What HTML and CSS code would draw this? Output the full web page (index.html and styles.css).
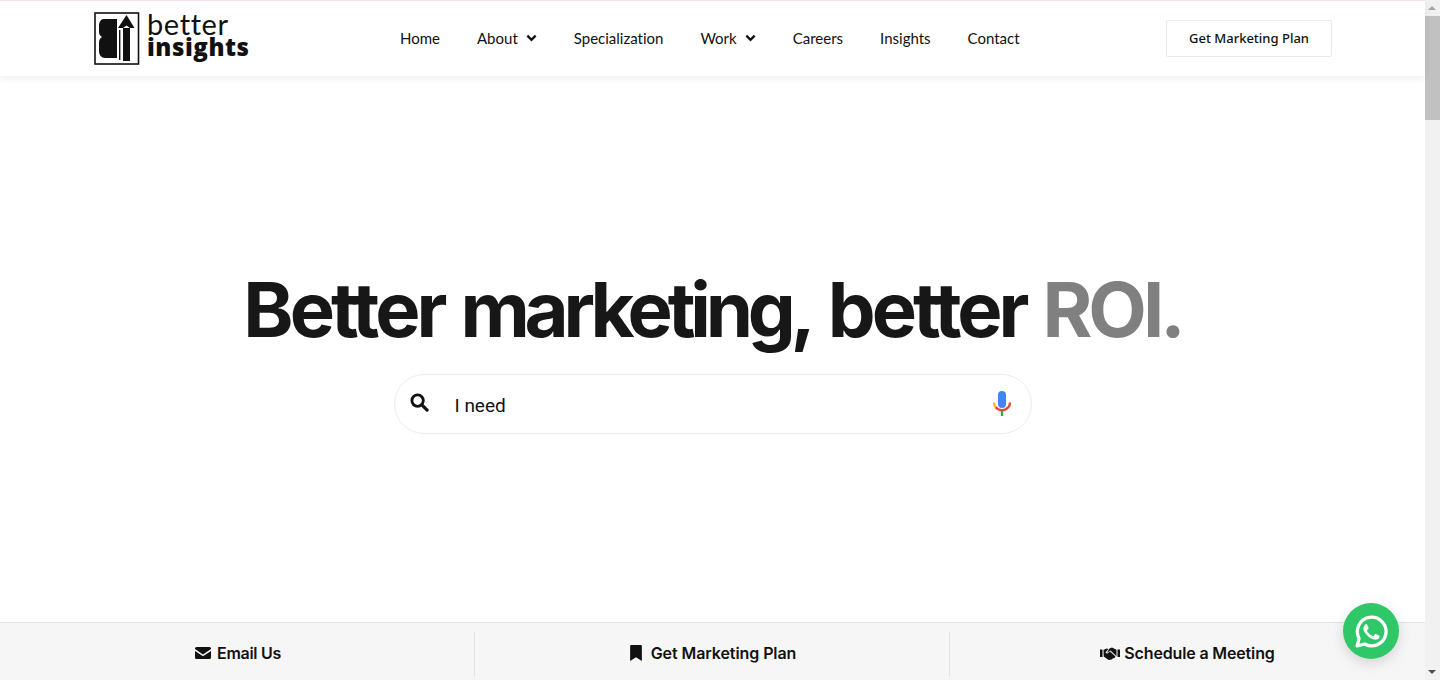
FILE: index.html
```html
<!DOCTYPE html>
<html lang="en">
<head>
<meta charset="utf-8">
<title>Better Insights</title>
<link rel="stylesheet" href="styles.css">
</head>
<body>
<div class="page">
  <header class="header">
    <a class="logo" href="#">
      <svg class="logo-mark" viewBox="0 0 46 53" width="46" height="53">
        <rect x="1" y="1" width="43.500" height="51" fill="#fff" stroke="#111" stroke-width="1.600"/>
        <path d="M9.500 7H23v39H11c-3.500 0-6-3-6-7v-8c0-3 1-5 3-6-2-1-3-3-3-5v-6c0-4 2-7 4.500-7z" fill="#111"/>
        <path d="M32.500 3l8 13h-4.500l-3.500-2.500L29 16h-5z" fill="#111"/>
        <rect x="29" y="16" width="7" height="33" fill="#111"/>
        <rect x="25" y="18" width="1.400" height="30" fill="#111"/>
      </svg>
      <span class="logo-text">
        <span class="logo-top">better</span>
        <span class="logo-bottom">insights</span>
      </span>
    </a>
    <nav class="nav">
      <a href="#">Home</a>
      <a href="#">About<svg class="chev" viewBox="0 0 12 8" width="11" height="8"><path d="M1.500 1.500L6 6l4.500-4.500" fill="none" stroke="#111" stroke-width="2.600"/></svg></a>
      <a href="#">Specialization</a>
      <a href="#">Work<svg class="chev" viewBox="0 0 12 8" width="11" height="8"><path d="M1.500 1.500L6 6l4.500-4.500" fill="none" stroke="#111" stroke-width="2.600"/></svg></a>
      <a href="#">Careers</a>
      <a href="#">Insights</a>
      <a href="#">Contact</a>
    </nav>
    <a class="cta" href="#">Get Marketing Plan</a>
  </header>

  <main class="hero">
    <h1 class="title">Better <span class="title-tight">marketing,</span> better <span class="muted">ROI.</span></h1>
    <div class="search">
      <svg class="search-icon" viewBox="0 0 20 20" width="19" height="19"><circle cx="8" cy="8" r="6" fill="none" stroke="#111" stroke-width="3"/><path d="M12.500 12.500L18 18" stroke="#111" stroke-width="3.400" stroke-linecap="round"/></svg>
      <span class="search-text">I need</span>
      <svg class="mic" viewBox="0 0 20 28" width="20" height="28">
        <rect x="6" y="1" width="8" height="17" rx="4" fill="#4285f4"/>
        <path d="M2 12.500c0 2 .6 3.600 1.700 4.800" fill="none" stroke="#fbbc05" stroke-width="2.400"/>
        <path d="M3.700 17.300C5.500 19.300 7.600 20.300 10 20.300s4.500-1 6.300-3 1.700-2.800 1.700-4.800" fill="none" stroke="#ea4335" stroke-width="2.400"/>
        <rect x="8.800" y="20.500" width="2.400" height="5.500" fill="#34a853"/>
      </svg>
    </div>
  </main>

  <footer class="actions">
    <a class="action action-email" href="#">
      <svg viewBox="0 0 16 12" width="16" height="12"><path d="M1.500 0h13A1.500 1.500 0 0 1 16 1.500v.6L8 7.500 0 2.100v-.6A1.500 1.500 0 0 1 1.500 0zM0 4l8 5.300L16 4v6.500a1.500 1.500 0 0 1-1.500 1.500h-13A1.500 1.500 0 0 1 0 10.500z" fill="#111"/></svg>
      Email Us
    </a>
    <a class="action action-wide" href="#">
      <svg viewBox="0 0 11 15" width="12" height="16"><path d="M1 0h9a1 1 0 0 1 1 1v14l-5.500-3.500L0 15V1a1 1 0 0 1 1-1z" fill="#111"/></svg>
      Get Marketing Plan
    </a>
    <a class="action action-tight" href="#">
      <svg viewBox="0 0 20 13" width="20" height="13"><path d="M0 2.500h2.500v7.500H0zM17.500 2.500H20v7.500h-2.500zM3.500 3l3-1.500 2 .5L5.800 5c-.5 1 .8 2 2 1.200L10 4.500l5.500 5-1 1.500-1.800.4-1 1.100-1.700.3-1.300.2-5-3.500zM9.500 1.500L12 .5l4.500 2.300v6.400l-6-5.700-2.500 1.800-1 .2z" fill="#111"/></svg>
      Schedule a Meeting
    </a>
  </footer>
</div>

<div class="scrollbar">
  <span class="arrow-up"></span>
  <span class="thumb"></span>
  <span class="track"></span>
  <span class="arrow-down"></span>
</div>

<a class="whatsapp" href="#">
  <svg viewBox="0 0 32 32" width="37" height="37"><path d="M3.500 28.500l1.800-6.500A12.400 12.400 0 1 1 10 26.800z" fill="none" stroke="#fff" stroke-width="2.800" stroke-linejoin="round"/><path d="M11.900 9.300c-.4 0-1 .2-1.500.8-.6.7-1.400 1.600-1.400 3.300s1.200 3.400 1.400 3.600c.2.200 2.400 3.800 5.900 5.200 2.900 1.100 3.500.9 4.100.8.600-.1 2-.8 2.300-1.600.3-.8.300-1.500.2-1.600-.1-.2-.3-.2-.7-.4l-2.400-1.200c-.4-.1-.6-.2-.8.200l-1.100 1.400c-.2.200-.4.300-.8.100-.4-.2-1.500-.6-2.900-1.800-1.100-1-1.800-2.200-2-2.500-.2-.4 0-.6.200-.8l.6-.7.4-.6c.1-.2.1-.5 0-.7l-1.100-2.600c-.3-.7-.6-.7-.8-.7z" fill="#fff"/></svg>
</a>
</body>
</html>
```
FILE: styles.css
```css
* { box-sizing: border-box; }
html, body { margin: 0; height: 100%; overflow: hidden; }
body {
  display: flex;
  font-family: "Inter", "Liberation Sans", sans-serif;
  color: #111;
  background: #fff;
}
a { color: inherit; text-decoration: none; }

.page {
  flex: 1;
  min-width: 0;
  height: 680px;
  display: flex;
  flex-direction: column;
}

.header {
  height: 76px;
  flex: none;
  display: flex;
  align-items: center;
  padding: 0 93px 0 94px;
  border-top: 1px solid #f5dfe6;
  box-shadow: 0 2px 8px rgba(0, 0, 0, .07);
  position: relative;
}
.logo { display: flex; align-items: center; gap: 7px; width: 306px; margin-top: -1px; }
.logo-mark { flex: none; }
.logo-text { display: flex; flex-direction: column; margin-top: -5px; }
.logo-top { font: 400 29px/23px "Lato", sans-serif; letter-spacing: .6px; }
.logo-bottom { font: 800 24px/24px "Open Sans", sans-serif; letter-spacing: .55px; }

.nav {
  display: flex;
  align-items: center;
  gap: 37px;
  margin-top: -2px;
  font: 400 15px/20px "Lato", sans-serif;
  font-variant-ligatures: none;
}
.nav a { display: flex; align-items: center; gap: 8px; }
.chev { flex: none; }

.cta {
  margin-left: auto;
  width: 166px;
  height: 37px;
  padding-bottom: 2px;
  display: flex;
  align-items: center;
  justify-content: center;
  border: 1px solid #e9e9e9;
  border-radius: 2px;
  font: 500 13px/20px "Noto Sans", sans-serif;
}

.hero {
  flex: 1;
  display: flex;
  flex-direction: column;
  align-items: center;
  padding-top: 188px;
}
.title {
  margin: 0;
  font: 700 76px/90px "Inter", sans-serif;
  letter-spacing: -4px;
  word-spacing: 3px;
  color: #171717;
  white-space: nowrap;
}
.title-tight { letter-spacing: -5.200px; }
.muted { color: #808080; }

.search {
  width: 638px;
  height: 60px;
  margin-top: 20px;
  display: flex;
  align-items: center;
  padding: 0 19px 0 15px;
  border: 1px solid #ececec;
  border-radius: 30px;
}
.search-icon { flex: none; margin-top: -3px; }
.search-text { flex: 1; margin: 3px 0 0 26px; font: 400 19px/24px "Roboto", sans-serif; }
.mic { flex: none; }

.actions {
  height: 58px;
  flex: none;
  display: grid;
  grid-template-columns: repeat(3, 1fr);
  padding: 9px 0 0;
  background: #f6f6f6;
  border-top: 1px solid #e2e2e2;
}
.action {
  display: flex;
  align-items: center;
  justify-content: center;
  gap: 6px;
  height: 44px;
  padding-bottom: 2px;
  font: 600 16px/20px "Inter", sans-serif;
  letter-spacing: -.15px;
  border-right: 1px solid #e3e3e3;
}
.action:last-child { border-right: 0; }
.action-email { letter-spacing: -.3px; padding-left: 2px; }
.action-wide { gap: 9px; letter-spacing: -.08px; padding-left: 2px; }
.action-tight { gap: 4px; }

.scrollbar {
  width: 15px;
  flex: none;
  height: 680px;
  display: flex;
  flex-direction: column;
  align-items: center;
  background: #f1f1f1;
}
.arrow-up, .arrow-down { flex: none; width: 15px; height: 16px; position: relative; }
.arrow-up::after, .arrow-down::after {
  content: "";
  position: absolute;
  left: 3px;
  border: 4px solid transparent;
}
.arrow-up::after { top: 2px; border-bottom: 4px solid #a3a3a3; }
.arrow-down::after { top: 6px; border-top: 4px solid #505050; }
.thumb { flex: none; width: 15px; height: 104px; background: #c1c1c1; }
.track { flex: 1; }

.whatsapp {
  position: fixed;
  left: 1343px;
  top: 603px;
  width: 56px;
  height: 56px;
  border-radius: 50%;
  background: #2fc768;
  display: flex;
  align-items: center;
  justify-content: center;
  box-shadow: 0 4px 14px rgba(0, 0, 0, .14);
}
```
